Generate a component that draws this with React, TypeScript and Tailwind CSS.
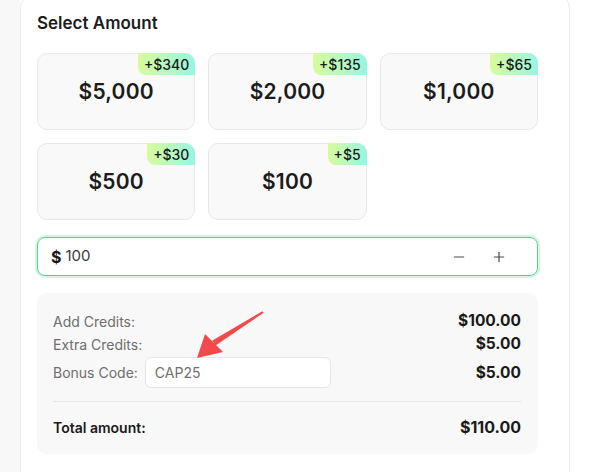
import { Minus, Plus } from 'lucide-react';

const packs = [
  { amount: '$5,000', bonus: '+$340' },
  { amount: '$2,000', bonus: '+$135' },
  { amount: '$1,000', bonus: '+$65' },
  { amount: '$500', bonus: '+$30' },
  { amount: '$100', bonus: '+$5' },
];

function PackTile({ amount, bonus }: { amount: string; bonus: string }) {
  return (
    <div className="relative h-[77px] rounded-[10px] border border-[#e8e8e8] bg-[#f9f9f9] flex items-center justify-center">
      <span className="absolute -top-px -right-px h-[22px] px-[6px] flex items-center rounded-tr-[10px] rounded-bl-[8px] bg-gradient-to-r from-[#d7fc9a] to-[#97f5e1] text-[14px] font-medium text-[#1a1a1a]">
        {bonus}
      </span>
      <span className="text-[21px] font-semibold text-[#1c1c1c] tracking-[0.2px]">{amount}</span>
    </div>
  );
}

function Row({ label, value }: { label: string; value: string }) {
  return (
    <div className="flex items-center justify-between h-5">
      <span className="text-[14px] text-[#6e6e6e]">{label}</span>
      <span className="text-[15.5px] font-bold text-[#1a1a1a]">{value}</span>
    </div>
  );
}

export default function App() {
  return (
    <div
      className="flex h-[472px] bg-white overflow-hidden"
      style={{ fontFamily: 'Inter, "Noto Sans", sans-serif' }}
    >
      <div className="w-5 shrink-0 bg-[#f8f8f8]" />
      <div className="w-[550px] h-[500px] shrink-0 -mt-[6px] border border-[#ececec] rounded-t-[14px] bg-white pl-4 pr-[31px] pt-[16px]">
        <h2 className="text-[17px] leading-6 font-semibold text-[#1c1c1c]">Select Amount</h2>

        <div className="mt-[18px] grid grid-cols-3 gap-[13px]">
          {packs.map(p => (
            <PackTile key={p.amount} amount={p.amount} bonus={p.bonus} />
          ))}
        </div>

        {/* Custom amount */}
        <div className="mt-[17px] h-[39px] rounded-[8px] border-[1.5px] border-[#5ccf8c] shadow-[0_0_0_2px_#d6f4e2] flex items-center pl-[13px] pr-[30px]">
          <span className="text-[16px] font-bold text-[#1a1a1a]">$</span>
          <span className="ml-[4px] text-[15px] text-[#3a3a3a]">100</span>
          <Minus size={16} strokeWidth={1.8} className="ml-auto text-[#4a4a4a]" />
          <Plus size={16} strokeWidth={1.8} className="ml-[24px] text-[#4a4a4a]" />
        </div>

        {/* Summary */}
        <div className="relative mt-[17px] rounded-[10px] bg-[#f8f8f8] pl-4 pr-[17px] pt-[18px] pb-[17px]">
          <div className="flex flex-col gap-[3px]">
            <Row label="Add Credits:" value="$100.00" />
            <Row label="Extra Credits:" value="$5.00" />
            <div className="flex items-center justify-between h-[31px]">
              <div className="flex items-center">
                <span className="text-[14px] text-[#6e6e6e]">Bonus Code:</span>
                <div className="ml-[7px] w-[186px] h-[31px] rounded-[6px] border border-[#e3e5ea] bg-white flex items-center px-[9px] text-[14px] text-[#707070]">
                  CAP25
                </div>
              </div>
              <span className="text-[15.5px] font-bold text-[#1a1a1a]">$5.00</span>
            </div>
          </div>
          <div className="mt-[13px] border-t border-[#e6e6e6]" />
          <div className="mt-[15px] flex items-center justify-between h-5">
            <span className="text-[14px] font-semibold text-[#1a1a1a]">Total amount:</span>
            <span className="text-[16px] font-bold text-[#1a1a1a]">$110.00</span>
          </div>

          <svg
            className="absolute left-[150px] top-[10px] pointer-events-none"
            width="90"
            height="60"
            viewBox="0 0 90 60"
          >
            <polygon points="76.6,9.8 75.4,8.2 25.4,37.5 28.6,42.5" fill="#f24a4a" />
            <polygon points="10,55 18,31 36,49" fill="#f24a4a" />
          </svg>
        </div>
      </div>
      <div className="flex-1" />
    </div>
  );
}
